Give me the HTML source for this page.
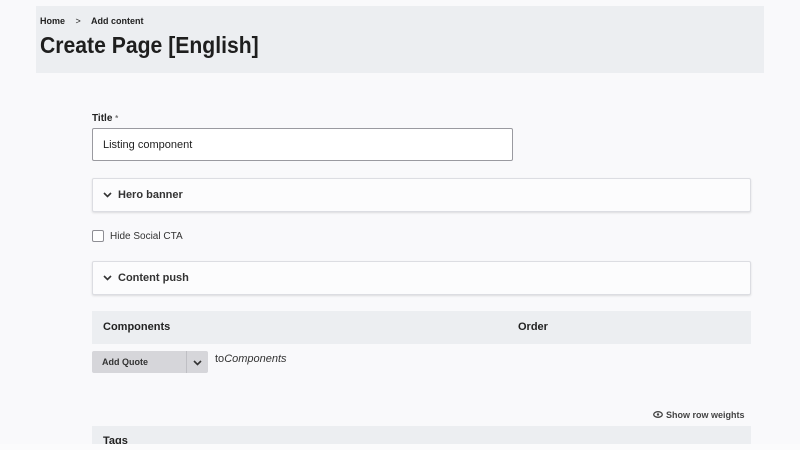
<!DOCTYPE html>
<html><head><meta charset="utf-8"><style>
*{box-sizing:border-box;margin:0;padding:0}
html,body{width:800px;height:450px;overflow:hidden}
body{background:#f9f9fb;font-family:"Liberation Sans",Arial,sans-serif;color:#222;position:relative}
.a{position:absolute}
.hdr{left:36px;top:6px;width:728px;height:67px;background:#eceef1}
.crumb{left:40px;top:16px;font-size:9px;font-weight:bold;color:#222}
h1{position:absolute;left:40px;top:32px;font-size:23px;font-weight:bold;color:#1e1e1e;transform:scaleX(.92);transform-origin:left}
.lbl{font-size:10px;font-weight:bold}
.input{left:92px;top:128px;width:421px;height:33px;border:1px solid #9a9aa0;border-radius:2px;background:#fff;font-size:11px;padding:10px 10px;color:#222}
.panel{left:92px;width:659px;height:34px;background:#fcfcfd;border:1px solid #dcdde2;border-radius:2px;box-shadow:0 1px 2px rgba(0,0,0,.12);font-size:11px;font-weight:bold;padding:10px 0 0 25px;color:#333}
.panel svg{position:absolute;left:10px;top:13px}
.cb{left:92px;top:230px;width:12px;height:12px;border:1px solid #8e8e94;border-radius:2px;background:#fff}
.th{left:92px;top:311px;width:659px;height:33px;background:#eceef1;font-size:11px;font-weight:bold}
.btn{left:92px;top:351px;width:116px;height:22px;background:#d6d6da;border-radius:2px;font-size:9px;font-weight:bold;color:#333}
</style></head><body>
<div class="a hdr"></div>
<div class="a crumb">Home <span style="margin:0 8px;font-weight:normal">&gt;</span> Add content</div>
<h1>Create Page [English]</h1>
<div class="a lbl" style="left:92px;top:113px">Title <span style="color:#777;font-size:8px">*</span></div>
<div class="a input">Listing component</div>
<div class="a panel" style="top:178px"><svg width="9" height="6" viewBox="0 0 9 6"><path d="M1 1l3.5 3.5L8 1" fill="none" stroke="#333" stroke-width="1.6"/></svg>Hero banner</div>
<div class="a cb"></div>
<div class="a" style="left:110px;top:231px;font-size:10px;color:#333">Hide Social CTA</div>
<div class="a panel" style="top:261px"><svg width="9" height="6" viewBox="0 0 9 6"><path d="M1 1l3.5 3.5L8 1" fill="none" stroke="#333" stroke-width="1.6"/></svg>Content push</div>
<div class="a th"><span class="a" style="left:11px;top:10px">Components</span><span class="a" style="left:426px;top:10px">Order</span></div>
<div class="a btn"><span class="a" style="left:10px;top:6px">Add Quote</span><span class="a" style="left:94px;top:0;width:1px;height:22px;background:#bfbfc4"></span><svg class="a" style="left:101px;top:9px" width="9" height="6" viewBox="0 0 9 6"><path d="M1 1l3.5 3.5L8 1" fill="none" stroke="#333" stroke-width="1.6"/></svg></div>
<div class="a" style="left:215px;top:353px;font-size:11px;color:#333">to<i>Components</i></div>
<svg class="a" style="left:653px;top:411px" width="10" height="7" viewBox="0 0 10 7"><ellipse cx="5" cy="3.5" rx="4.3" ry="2.8" fill="none" stroke="#444" stroke-width="1.3"/><circle cx="5" cy="3.5" r="1.2" fill="#444"/></svg>
<div class="a" style="left:666px;top:410px;font-size:9px;font-weight:bold;color:#444">Show row weights</div>
<div class="a th" style="top:426px;height:18px;overflow:hidden"><span class="a" style="left:11px;top:9px">Tags</span></div>
<div class="a" style="left:0;top:444px;width:800px;height:6px;background:#fbfbfc"></div>
</body></html>
